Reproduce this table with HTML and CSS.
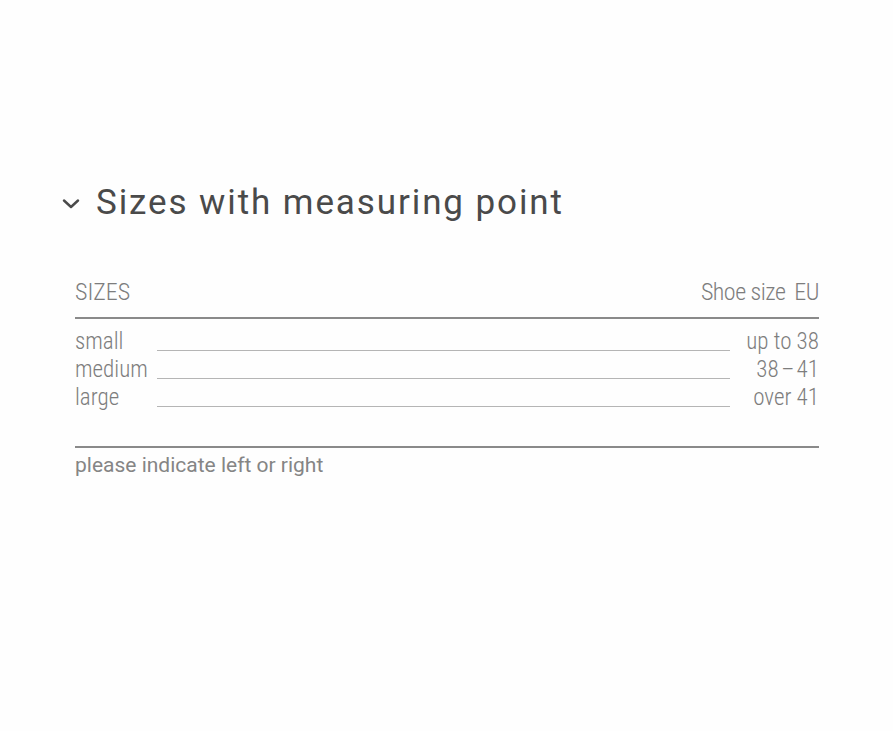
FILE: index.html
```html
<!DOCTYPE html>
<html lang="en">
<head>
<meta charset="utf-8">
<title>Sizes with measuring point</title>
<link rel="stylesheet" href="styles.css">
</head>
<body>
<main class="page">
  <section class="panel">
    <h2 class="panel-title">
      <svg class="chevron" width="18" height="10" viewBox="0 0 18 10" aria-hidden="true"><path d="M2 1.5 L9 8 L16 1.5" fill="none" stroke="#4a4a4a" stroke-width="2.4" stroke-linecap="round" stroke-linejoin="round"/></svg>
      <span>Sizes with measuring point</span>
    </h2>
    <div class="size-table">
      <div class="table-head">
        <span class="head-left">SIZES</span>
        <span class="head-right">Shoe size <span class="unit">EU</span></span>
      </div>
      <div class="table-rows">
        <div class="row"><span class="label">small</span><span class="leader"></span><span class="value">up to 38</span></div>
        <div class="row"><span class="label">medium</span><span class="leader"></span><span class="value">38&#8202;–&#8202;41</span></div>
        <div class="row"><span class="label">large</span><span class="leader"></span><span class="value">over 41</span></div>
      </div>
      <div class="table-foot">please indicate left or right</div>
    </div>
  </section>
</main>
</body>
</html>
```
FILE: styles.css
```css
html, body {
  margin: 0;
  padding: 0;
  background: #fefefe;
}
.page {
  width: 893px;
  height: 731px;
  box-sizing: border-box;
  padding-top: 180px;
}
.panel {
  padding-left: 62px;
}
.panel-title {
  margin: 0;
  display: flex;
  align-items: center;
  gap: 16px;
  font-family: Roboto, "Liberation Sans", sans-serif;
  font-weight: 400;
  font-size: 35px;
  letter-spacing: 1.9px;
  color: #4a4a4a;
  line-height: 46px;
}
.chevron {
  flex: none;
  margin-top: 2px;
}
.size-table {
  margin-top: 51px;
  margin-left: 13px;
  width: 744px;
  font-family: Roboto, "Liberation Sans", sans-serif;
  font-weight: 300;
  font-stretch: condensed;
  color: #7d7d7d;
}
.table-head {
  display: flex;
  justify-content: space-between;
  align-items: flex-end;
  font-size: 24px;
  line-height: 30px;
  padding-bottom: 10px;
  border-bottom: 2px solid #8a8a8a;
}
.head-right {
  letter-spacing: -0.5px;
}
.unit {
  margin-left: 4px;
}
.table-rows {
  padding-top: 9px;
  padding-bottom: 34px;
  border-bottom: 2px solid #8a8a8a;
}
.row {
  display: flex;
  align-items: flex-end;
  font-size: 23px;
  line-height: 28px;
}
.label {
  width: 82px;
  flex: none;
}
.leader {
  flex: 1;
  border-bottom: 1px solid #b5b5b5;
  margin-bottom: 5px;
}
.value {
  width: 89px;
  flex: none;
  text-align: right;
}
.table-foot {
  font-weight: 380;
  font-stretch: 92%;
  font-size: 21px;
  line-height: 34px;
  color: #858585;
}
```
